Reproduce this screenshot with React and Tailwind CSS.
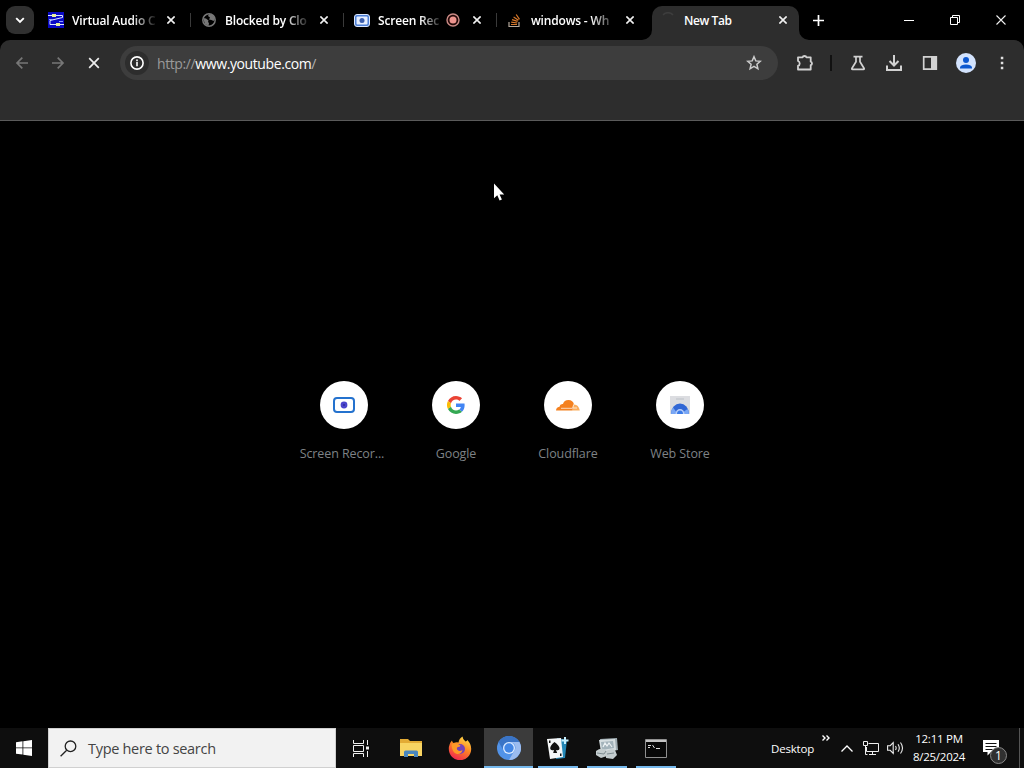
import React from "react";

const CloseIcon = ({ size = 8, width = 1.6 }) => (
  <svg width={size} height={size} viewBox="0 0 8 8" stroke="#f1f1f1" strokeWidth={width} fill="none">
    <path d="M.4.4l7.2 7.2M7.6.4L.4 7.6" />
  </svg>
);

const AudioIcon = () => (
  <svg width="16" height="16" viewBox="0 0 16 16" fill="none">
    <path fill="#0a0ac4" d="M0 0h16v16H0z" />
    <path d="M0 3.500h14.500v2L2 8.500v4h14" stroke="#dfe8ff" strokeWidth="1" />
    <path d="M1 7.500h4M11 9.500h4" stroke="#8fa0ff" strokeWidth="1" />
    <path fill="#e8f09a" d="M4 2h4v3H4zM8 11h4v3H8z" />
  </svg>
);

const GlobeIcon = () => (
  <svg width="16" height="16" viewBox="0 0 16 16" fill="none">
    <circle cx="8" cy="8" r="6.200" stroke="#777" strokeWidth="1.500" />
    <path fill="#777" d="M2 6l3 .5 2.500 2L7 10l1 1-.5 3L4 12zM8 2l4 1 2 4-1.500 2-2-1-2.500-.5L9 5.500 7 4z" />
  </svg>
);

const RecorderIcon = ({ boxed }) => (
  <svg width={boxed ? 16 : 22} height={boxed ? 13 : 16} viewBox={boxed ? "0 0 16 13" : "0 0 22 16"} fill="none">
    {boxed ? (
      <>
        <rect x=".5" y=".5" width="15" height="12" rx="2.500" fill="#4d7fd6" stroke="#dbe8ff" />
        <rect x="2.500" y="2.500" width="11" height="8" rx="1" fill="#e6efff" />
        <circle cx="8" cy="6.500" r="2.500" fill="#3c5fae" />
      </>
    ) : (
      <>
        <rect x="1" y="1" width="20" height="14" rx="3" fill="#fff" stroke="#2472ce" strokeWidth="2" />
        <circle cx="11" cy="8" r="3.400" fill="#4a45cc" />
        <circle cx="11" cy="8" r="1" fill="#2d2a9c" />
      </>
    )}
  </svg>
);

const StackIcon = () => (
  <svg width="16" height="16" viewBox="0 0 16 16" fill="none">
    <path d="M2 10v4.500h10V10" stroke="#b5a99c" strokeWidth="1.200" />
    <path d="M4 12.500h6M4.200 10.200l6 .8M5 7.600l5.600 1.800M6.600 4.900l4.800 3.400M9.200 2.500l3.300 4.900" stroke="#d8782a" strokeWidth="1.200" />
  </svg>
);

const tabs = [
  { title: "Virtual Audio C", icon: <AudioIcon /> },
  { title: "Blocked by Clo", icon: <GlobeIcon /> },
  { title: "Screen Rec", icon: <RecorderIcon boxed />, recording: true },
  { title: "windows - Wh", icon: <StackIcon /> },
];

const Tab = ({ tab, last }) => (
  <div className="relative flex h-10 w-[153px] items-center pl-[10px]">
    <span className="flex w-4 shrink-0">{tab.icon}</span>
    <span
      className={`ml-2 whitespace-nowrap pt-[2px] text-[12px] font-semibold tracking-[-0.18px] text-white ${tab.recording ? "w-[64px] [mask-image:linear-gradient(to_right,black_42px,transparent_66px)]" : "w-[84px] [mask-image:linear-gradient(to_right,black_60px,transparent_86px)]"}`}
    >
      {tab.title}
    </span>
    {tab.recording && (
      <svg className="ml-1 shrink-0" width="14" height="14" viewBox="0 0 14 14">
        <circle cx="7" cy="7" r="6" fill="#250908" stroke="#c98a85" strokeWidth="1.400" />
        <circle cx="7" cy="7" r="3.500" fill="#ee948e" />
      </svg>
    )}
    <span className="ml-auto mr-4">
      <CloseIcon />
    </span>
    {!last && <span className="absolute right-0 top-[13px] h-[14px] w-px bg-[#3a3a3a]" />}
  </div>
);

const TabStrip = () => (
  <div className="flex h-10 bg-black">
    <button className="ml-[6px] mr-1 mt-[6px] flex h-7 w-7 items-center justify-center rounded-[9px] bg-[#303030]">
      <svg width="10" height="7" viewBox="0 0 10 7" fill="none" stroke="#fff" strokeWidth="1.900">
        <path d="M1.200 1.200L5 5l3.800-3.800" />
      </svg>
    </button>
    <div className="-mr-[1px] flex">
      {tabs.map((tab, i) => (
        <Tab key={tab.title} tab={tab} last={i === tabs.length - 1} />
      ))}
    </div>
    <div className="relative ml-[3px] mt-[6px] flex h-[34px] w-[147px] items-center rounded-t-[10px] bg-[#2d2d2d]">
      <svg className="absolute -left-[10px] bottom-0" width="10" height="10" viewBox="0 0 10 10">
        <path fill="#2d2d2d" d="M10 0v10H0A10 10 0 0010 0z" />
      </svg>
      <svg className="absolute -right-[10px] bottom-0" width="10" height="10" viewBox="0 0 10 10">
        <path fill="#2d2d2d" d="M0 0v10h10A10 10 0 010 0z" />
      </svg>
      <svg className="-mt-[6px] ml-2" width="16" height="16" viewBox="0 0 16 16" fill="none">
        <path d="M3 3a6.500 6.500 0 0110 0" stroke="#3d3d3d" strokeWidth="1.500" />
      </svg>
      <span className="-mt-[4px] ml-2 text-[12px] font-semibold tracking-[-0.4px] text-white">New Tab</span>
      <span className="-mt-[6px] ml-auto mr-3 flex">
        <CloseIcon />
      </span>
    </div>
    <svg className="ml-[14px] mt-[15px]" width="11" height="11" viewBox="0 0 11 11" stroke="#fff" strokeWidth="1.700">
      <path d="M5.500 0v11M0 5.500h11" />
    </svg>
    <div className="ml-auto flex h-10 items-center">
      <span className="flex w-[46px] justify-center">
        <span className="h-px w-[10px] bg-white" />
      </span>
      <span className="flex w-[46px] justify-center">
        <svg width="10" height="10" viewBox="0 0 10 10" fill="none" stroke="#fff">
          <path d="M.5 2.500h7v7h-7zM2.500 2.500v-2h7v7h-2" />
        </svg>
      </span>
      <span className="flex w-[46px] justify-center">
        <CloseIcon size={10} width={0.85} />
      </span>
    </div>
  </div>
);

const ToolIcon = ({ children, className = "" }) => (
  <svg className={className} width="20" height="20" viewBox="0 0 20 20" fill="none" stroke="#d2d2d2" strokeWidth="1.700">
    {children}
  </svg>
);

const Toolbar = () => (
  <div className="bg-black">
    <div className="h-[81px] rounded-t-[10px] border-b border-[#5a5a5a] bg-[#2d2d2d]">
      <div className="flex h-[46px] items-center">
        <ToolIcon className="ml-3">
          <path stroke="#777" d="M16 10H5M10.300 4.700L5 10l5.300 5.300" />
        </ToolIcon>
        <ToolIcon className="ml-4">
          <path stroke="#777" d="M4 10h11M9.700 4.700L15 10l-5.300 5.300" />
        </ToolIcon>
        <ToolIcon className="ml-4">
          <path stroke="#eee" d="M5.200 5.200l9.600 9.600M14.800 5.200l-9.600 9.600" />
        </ToolIcon>
        <div className="ml-4 flex h-[34px] w-[658px] items-center rounded-full bg-[#3d3d3d]">
          <span className="ml-[5px] flex h-6 w-6 items-center justify-center rounded-full bg-[#2d2d2d]">
            <svg width="14" height="14" viewBox="0 0 14 14" fill="none" stroke="#fff" strokeWidth="1.600">
              <circle cx="7" cy="7" r="6.100" />
              <path d="M7 6v4.300M7 3.600v1.600" />
            </svg>
          </span>
          <span className="ml-2 pt-px text-[14px] leading-5 tracking-[-0.4px] text-white">
            <span className="text-[#9a9a9a]">http://</span>www.youtube.com<span className="text-[#b0b0b0]">/</span>
          </span>
          <svg className="ml-auto mr-4" width="16" height="16" viewBox="0 0 16 16" fill="none" stroke="#ccc" strokeWidth="1.500">
            <path d="M8 1.700l1.800 4.200 4.500.4-3.400 3 1 4.500L8 11.400l-3.900 2.400 1-4.500-3.400-3 4.500-.4z" />
          </svg>
        </div>
        <ToolIcon className="ml-[17px]">
          <path strokeWidth="1.800" strokeLinejoin="round" d="M3 4.300h4.600q.2-1.300 1.900-1.300t1.900 1.300h4.300v4.400q1.300.3 1.300 1.700t-1.300 1.700v4.400H3v-3.700q1.700-.5 1.700-2.400T3 8z" />
        </ToolIcon>
        <span className="ml-[15px] h-4 w-[2px] bg-[#111]" />
        <ToolIcon className="ml-4">
          <path d="M5.500 3.700h9M8 3.700v5.100L4 15.200q-.6 1.100.6 1.100h10.800q1.200 0 .6-1.100l-4-6.400V3.700" />
        </ToolIcon>
        <ToolIcon className="ml-4">
          <path strokeWidth="2" d="M10 2v10M5.500 8l4.500 4.500L14.500 8M3 12.500V17h14v-4.500" />
        </ToolIcon>
        <ToolIcon className="ml-4">
          <path d="M3.700 3.800h12.600v12.400H3.700z" />
          <path fill="#d2d2d2" stroke="none" d="M11 3h6v14h-6z" />
        </ToolIcon>
        <svg className="ml-4" width="20" height="20" viewBox="0 0 20 20">
          <circle cx="10" cy="10" r="10" fill="#d3e3fd" />
          <circle cx="10" cy="7" r="3" fill="#0b57d0" />
          <path fill="#0b57d0" d="M4 15.500v-1.200Q5 11.500 10 11.500t6 2.800v1.200z" />
        </svg>
        <ToolIcon className="ml-4">
          <path stroke="none" fill="#e0e0e0" d="M8.800 3.800h2.500v2.500H8.800zM8.800 8.800h2.500v2.500H8.800zM8.800 13.800h2.500v2.500H8.800z" />
        </ToolIcon>
      </div>
    </div>
  </div>
);

const GoogleIcon = () => (
  <svg width="18" height="18" viewBox="0 0 48 48">
    <path fill="#EA4335" d="M24 9.500c3.540 0 6.710 1.220 9.210 3.600l6.850-6.850C35.900 2.380 30.470 0 24 0 14.620 0 6.510 5.380 2.560 13.220l7.980 6.190C12.430 13.720 17.740 9.500 24 9.500z" />
    <path fill="#4285F4" d="M46.980 24.550c0-1.570-.15-3.090-.38-4.550H24v9.020h12.940c-.58 2.960-2.260 5.480-4.780 7.180l7.730 6c4.510-4.180 7.090-10.360 7.090-17.650z" />
    <path fill="#FBBC05" d="M10.530 28.590a14.500 14.500 0 010-9.180l-7.980-6.190a24 24 0 000 21.560l7.980-6.190z" />
    <path fill="#34A853" d="M24 48c6.480 0 11.930-2.130 15.890-5.810l-7.730-6c-2.150 1.450-4.920 2.300-8.160 2.300-6.260 0-11.570-4.220-13.470-9.910l-7.980 6.190C6.510 42.620 14.620 48 24 48z" />
  </svg>
);

const CloudIcon = () => (
  <svg width="24" height="12" viewBox="0 0 24 12">
    <path fill="#f48120" d="M0 11.500q0-3 3.500-3.800Q4 4.500 7 5 8 1 12.500 1q4.500 0 5.500 4.500l-1.500 6z" />
    <path fill="#faad5c" d="M17.500 5.500q5-.5 6.300 6h-7.300z" />
    <path stroke="#fff" strokeWidth=".7" d="M5 9.300h11.500l1.300-4M17 9h4" fill="none" />
  </svg>
);

const StoreIcon = () => (
  <svg width="20" height="20" viewBox="0 0 20 20">
    <path fill="#dcdde1" d="M0 1h20v18H0z" />
    <path fill="#cccfd4" d="M6 3h8v2H6z" />
    <path fill="#3167d5" d="M1 19a9 10.500 0 0118 0z" />
    <path fill="#79a7f5" d="M1 19q0-4 2-6.500l3 4V19zM14 19v-2.500l3.500-2.500Q19 16 19 19z" />
    <path fill="#b9cff8" d="M5.500 19a4.500 5 0 019 0z" />
    <path fill="#3b7be8" d="M7 19a3 3.500 0 016 0z" />
  </svg>
);

const shortcuts = [
  { label: "Screen Recor...", icon: <RecorderIcon /> },
  { label: "Google", icon: <GoogleIcon /> },
  { label: "Cloudflare", icon: <CloudIcon /> },
  { label: "Web Store", icon: <StoreIcon /> },
];

const NewTabPage = () => (
  <div className="flex flex-1 justify-center bg-black pt-[260px]">
    {shortcuts.map((s) => (
      <div key={s.label} className="flex w-28 flex-col items-center">
        <span className="flex h-12 w-12 items-center justify-center rounded-full bg-white">{s.icon}</span>
        <span
          className={`mt-[15px] whitespace-nowrap text-[12.5px] leading-5 tracking-[-0.1px] text-[#7e8286] ${s.label.endsWith("...") ? "pr-1" : ""}`}
        >
          {s.label}
        </span>
      </div>
    ))}
  </div>
);

const ExplorerIcon = () => (
  <svg width="22" height="20" viewBox="0 0 22 20">
    <path fill="#e3ab35" d="M0 1h8l2 2h12v15H0z" />
    <path fill="#f8d462" d="M0 5h22v13H0z" />
    <path fill="#4a86bd" d="M4 19v-5q0-1.500 1.500-1.500h11q1.500 0 1.500 1.500v5h-4v-3H8v3z" />
  </svg>
);

const FirefoxIcon = () => (
  <svg width="24" height="24" viewBox="0 0 24 24">
    <defs>
      <linearGradient id="fox" x1=".8" y1="0" x2=".3" y2="1">
        <stop offset="0" stopColor="#ffe24a" />
        <stop offset=".45" stopColor="#ff8a24" />
        <stop offset="1" stopColor="#f0254f" />
      </linearGradient>
    </defs>
    <path fill="url(#fox)" d="M4 4.500q.2 1.800 1.500 2.500Q8 6 10.500 6.500 11 2.500 14.500.5q.2 3 3 5 1.500-.4 1.800-1.500 4 4 3.900 9A11.200 11.200 0 01.8 13Q.8 8 4 4.500z" />
    <circle cx="12" cy="13" r="5" fill="#7542b8" />
    <path fill="#ff9a28" d="M3.500 8.500Q7 6.500 10 8l2.500 1.500q-.5 1.500-2.700 1.600-1.500.8-.8 2.400 2 2.500 5.500.5-1 4.500-5.500 4-5-1-5.500-9.500z" />
  </svg>
);

const ChromiumIcon = () => (
  <svg width="24" height="24" viewBox="0 0 24 24">
    <circle cx="12" cy="12" r="12" fill="#5293e8" />
    <path fill="#3a74c6" d="M1.600 6A12 12 0 0122.400 6H12a6 6 0 00-5.200 9z" />
    <path fill="#9bbcf0" d="M22.400 6A12 12 0 0112 24l5.200-9a6 6 0 00-.4-7.500L12 6z" />
    <circle cx="12" cy="12" r="6" fill="#dceaff" />
    <circle cx="12" cy="12" r="4.700" fill="#4286e5" />
  </svg>
);

const SolitaireIcon = () => (
  <svg width="24" height="24" viewBox="0 0 24 24">
    <path fill="#2487b6" d="M11 2l10 2-2 18-9 1z" />
    <path fill="#f5f7f8" d="M1 3l14-1 2 19-13 2z" />
    <path fill="#111" d="M8.500 6q5 3.500 5 6.500 0 2.500-3.500 1.500l1.200 3H7.200L8 14q-3.500 1-3.800-1.500Q4 9.500 8.500 6zM3 4.500h1.500V7H3zM14 17.500h1.500V20H14z" />
    <path stroke="#c6f0ff" strokeWidth="2" d="M19 1v7M15.500 4.500h7" />
  </svg>
);

const DrivesIcon = () => (
  <svg width="24" height="24" viewBox="0 0 24 24">
    <path fill="#9eabb1" d="M5 3l17-1 1 12-16 3z" />
    <path fill="#d6dee1" d="M4 4l16-1 1 11-15 2z" />
    <path fill="#a3b3bb" d="M6 6l12-1 1 7-12 2z" />
    <path stroke="#eef3f5" strokeWidth="1.200" fill="none" d="M8 11l2-4 2 3 2-3 3 4" />
    <path fill="#c4cdcf" d="M1 15q5-4 10-1l1 6-6 2-5-3zM11 15q5-3 9-1l2 5-4 4-7-1z" />
    <path stroke="#7f8d92" fill="none" d="M2 17l7 1 2-3M12 18l7-1" />
  </svg>
);

const TerminalIcon = () => (
  <svg width="22" height="19" viewBox="0 0 22 19" fill="none">
    <path fill="#080808" stroke="#909090" d="M.5.500h21v18H.500z" />
    <path fill="#c4c4c4" d="M1 1h20v2H1z" />
    <path stroke="#ddd" d="M3 6.500h3M3 8.500h2M7.500 6l2 3M11 9.500h4" />
  </svg>
);

const taskbarApps = [
  { id: "explorer", icon: <ExplorerIcon /> },
  { id: "firefox", icon: <FirefoxIcon /> },
  { id: "chromium", icon: <ChromiumIcon />, active: true },
  { id: "solitaire", icon: <SolitaireIcon />, open: true },
  { id: "drives", icon: <DrivesIcon />, open: true },
  { id: "terminal", icon: <TerminalIcon />, open: true },
];

const Taskbar = () => (
  <div className="flex h-10 items-center bg-[#0e0e0e] text-white">
    <div className="flex w-12 justify-center">
      <svg width="16" height="16" viewBox="0 0 16 16" fill="#fff">
        <path d="M0 2.200l6.500-.9v6.200H0zM7.300 1.200L16 0v7.500H7.300zM0 8.300h6.500v6.200L0 13.700zM7.300 8.300H16V16l-8.700-1.200z" />
      </svg>
    </div>
    <div className="flex h-10 w-72 items-center border border-[#d0d0d0] bg-[#f2f2f2]">
      <svg className="ml-[11px]" width="17" height="17" viewBox="0 0 17 17" fill="none" stroke="#222" strokeWidth="1.300">
        <circle cx="10.500" cy="6.300" r="5.300" />
        <path d="M6.700 10.200L.6 16.300" />
      </svg>
      <span className="ml-[11px] pt-[2px] text-[14.500px] tracking-[-0.3px] text-[#444]">Type here to search</span>
    </div>
    <div className="flex w-12 justify-center">
      <svg width="17" height="17" viewBox="0 0 17 17" fill="none" stroke="#f1f1f1">
        <path d="M1.500 0v3.500h10V0M1.500 5.500h10v6h-10zM1.500 17v-3.500h10V17M15.500 0v5M15.500 11v6" />
        <path fill="#f1f1f1" stroke="none" d="M14 6.500h3v3h-3z" />
      </svg>
    </div>
    <div className="flex h-10 pl-[2px]">
      {taskbarApps.map((app) => (
        <div
          key={app.id}
          className={`flex h-10 w-[49px] flex-col items-center ${app.active ? "bg-[#3b3b3b]" : ""}`}
        >
          <span className="flex flex-1 items-center pt-[2px]">{app.icon}</span>
          <span
            className={`h-[2px] ${app.active ? "w-full bg-[#76b9ed]" : app.open ? "w-10 bg-[#76b9ed]" : "w-10"}`}
          />
        </div>
      ))}
    </div>
    <div className="ml-auto flex h-10 items-center text-[11.500px]">
      <span className="pt-px tracking-[-0.2px]">Desktop</span>
      <svg className="mb-5 ml-2" width="8" height="6" viewBox="0 0 8 6" fill="none" stroke="#fff" strokeWidth="1.400">
        <path d="M.5.500L3 3 .5 5.500M4.500.500L7 3 4.500 5.500" />
      </svg>
      <svg className="ml-[11px]" width="12" height="7" viewBox="0 0 12 7" fill="none" stroke="#fff" strokeWidth="1.300">
        <path d="M.5 6.500L6 1l5.500 5.500" />
      </svg>
      <svg className="ml-[10px]" width="16" height="14" viewBox="0 0 16 14" fill="none" stroke="#eee">
        <path d="M5.500 2.500h10v8h-12V6M6 13.500h7M9.500 10.500v3" />
        <path d="M.5.500h4v4h-4zM2.500 4.500v9h2" />
      </svg>
      <svg className="ml-2" width="17" height="14" viewBox="0 0 17 14" fill="none" stroke="#eee" strokeWidth="1.100">
        <path d="M.6 4.700h2.600l3-3v10.600l-3-3H.6zM8.500 5q1.300 2 0 4M11 3.200q2.600 3.800 0 7.600M13.500 1.500q4 5.500 0 11" />
      </svg>
      <div className="ml-[7px] w-[56px] whitespace-nowrap text-center leading-[18px] tracking-[-0.25px]">
        <div>12:11 PM</div>
        <div>8/25/2024</div>
      </div>
      <div className="relative ml-4 mt-2 h-6 w-6">
        <svg width="16" height="16" viewBox="0 0 16 16">
          <path fill="#fff" d="M0 0h16v12h-8l-3.500 3.500V12H0z" />
          <path stroke="#111" d="M2.500 3.500h11M2.500 6.500h11M2.500 9.500h7" />
        </svg>
        <span className="absolute left-[7px] top-[7px] flex h-[17px] w-[17px] items-center justify-center rounded-full border border-[#888] bg-[#303030] text-[12px]">
          1
        </span>
      </div>
      <span className="ml-3 mr-1 h-10 w-px bg-[#555]" />
    </div>
  </div>
);

const App = () => (
  <div className="relative flex h-[768px] w-[1024px] flex-col overflow-hidden bg-black font-['Open_Sans','Noto_Sans',sans-serif]">
    <TabStrip />
    <Toolbar />
    <NewTabPage />
    <Taskbar />
    <svg className="absolute left-[494px] top-[183px]" width="12" height="18" viewBox="0 0 12 18">
      <path fill="#fff" d="M0 .500v14.800l3.300-3.100 2.300 5.200 2.300-1-2.300-5h4.600z" />
    </svg>
  </div>
);

export default App;
